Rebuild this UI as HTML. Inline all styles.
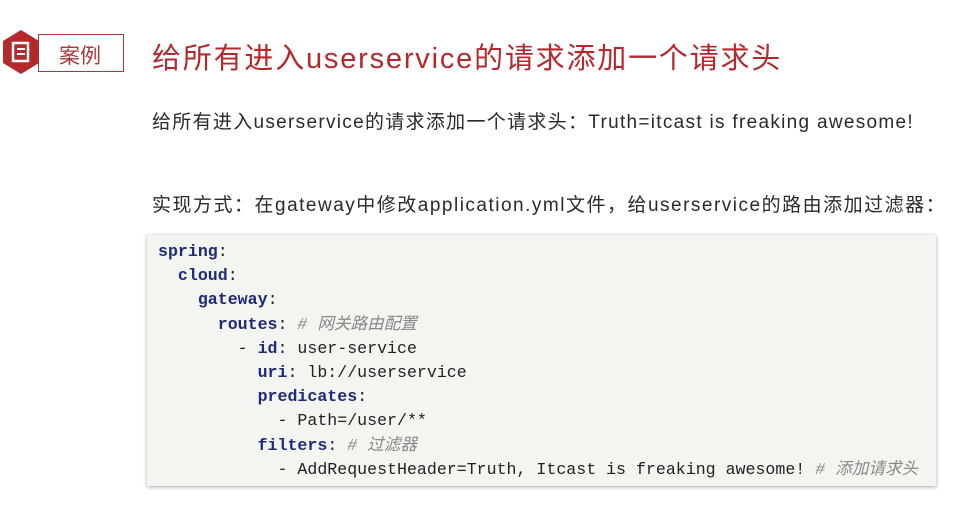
<!DOCTYPE html><html><head><meta charset="utf-8"><style>
body{margin:0;width:960px;height:511px;background:#fff;position:relative;overflow:hidden;font-family:"Liberation Sans","Noto Sans CJK SC",sans-serif}
.abs{position:absolute;white-space:nowrap}
.tag{left:38px;top:34px;width:86px;height:38px;border:1.5px solid #a8383a;box-sizing:border-box}
.tag span{position:absolute;left:20px;top:5px;font-size:21px;color:#a8383a}
.title{left:152px;top:35px;font-size:29px;color:#b5282d;letter-spacing:1.8px}
.t{font-size:19px;color:#2a2a2a;letter-spacing:1.6px}
.code{left:147px;top:235px;width:789px;height:251px;background:#f3f6f0;box-shadow:0 1px 4px rgba(0,0,0,.35)}
pre{margin:0;position:absolute;left:11px;top:5px;font-family:"Liberation Mono","Noto Sans CJK SC",monospace;font-size:16.6px;line-height:24.2px;color:#222}
b{color:#1f2a7a}
i{color:#888}
</style></head><body>
<svg class="abs" style="left:1px;top:29px" width="40" height="46" viewBox="0 0 40 46"><polygon points="20,1 38,12 38,34 20,45 2,34 2,12" fill="#b3292c"/><rect x="12" y="14" width="15" height="18" fill="none" stroke="#fff" stroke-width="2.5"/><line x1="16" y1="20" x2="24" y2="20" stroke="#fff" stroke-width="2"/><line x1="16" y1="25" x2="24" y2="25" stroke="#fff" stroke-width="2"/></svg>
<div class="abs tag"><span>案例</span></div>
<div class="abs title">给所有进入userservice的请求添加一个请求头</div>
<div class="abs t" style="left:152px;top:107px;letter-spacing:1.3px">给所有进入userservice的请求添加一个请求头：Truth=itcast is freaking awesome!</div>
<div class="abs t" style="left:152px;top:190px;letter-spacing:1.5px">实现方式：在gateway中修改application.yml文件，给userservice的路由添加过滤器：</div>
<div class="abs code"><pre><b>spring</b>:
  <b>cloud</b>:
    <b>gateway</b>:
      <b>routes</b>: <i># 网关路由配置</i>
        - <b>id</b>: user-service
          <b>uri</b>: lb://userservice
          <b>predicates</b>:
            - Path=/user/**
          <b>filters</b>: <i># 过滤器</i>
            - AddRequestHeader=Truth, Itcast is freaking awesome! <i># 添加请求头</i></pre></div>
</body></html>
